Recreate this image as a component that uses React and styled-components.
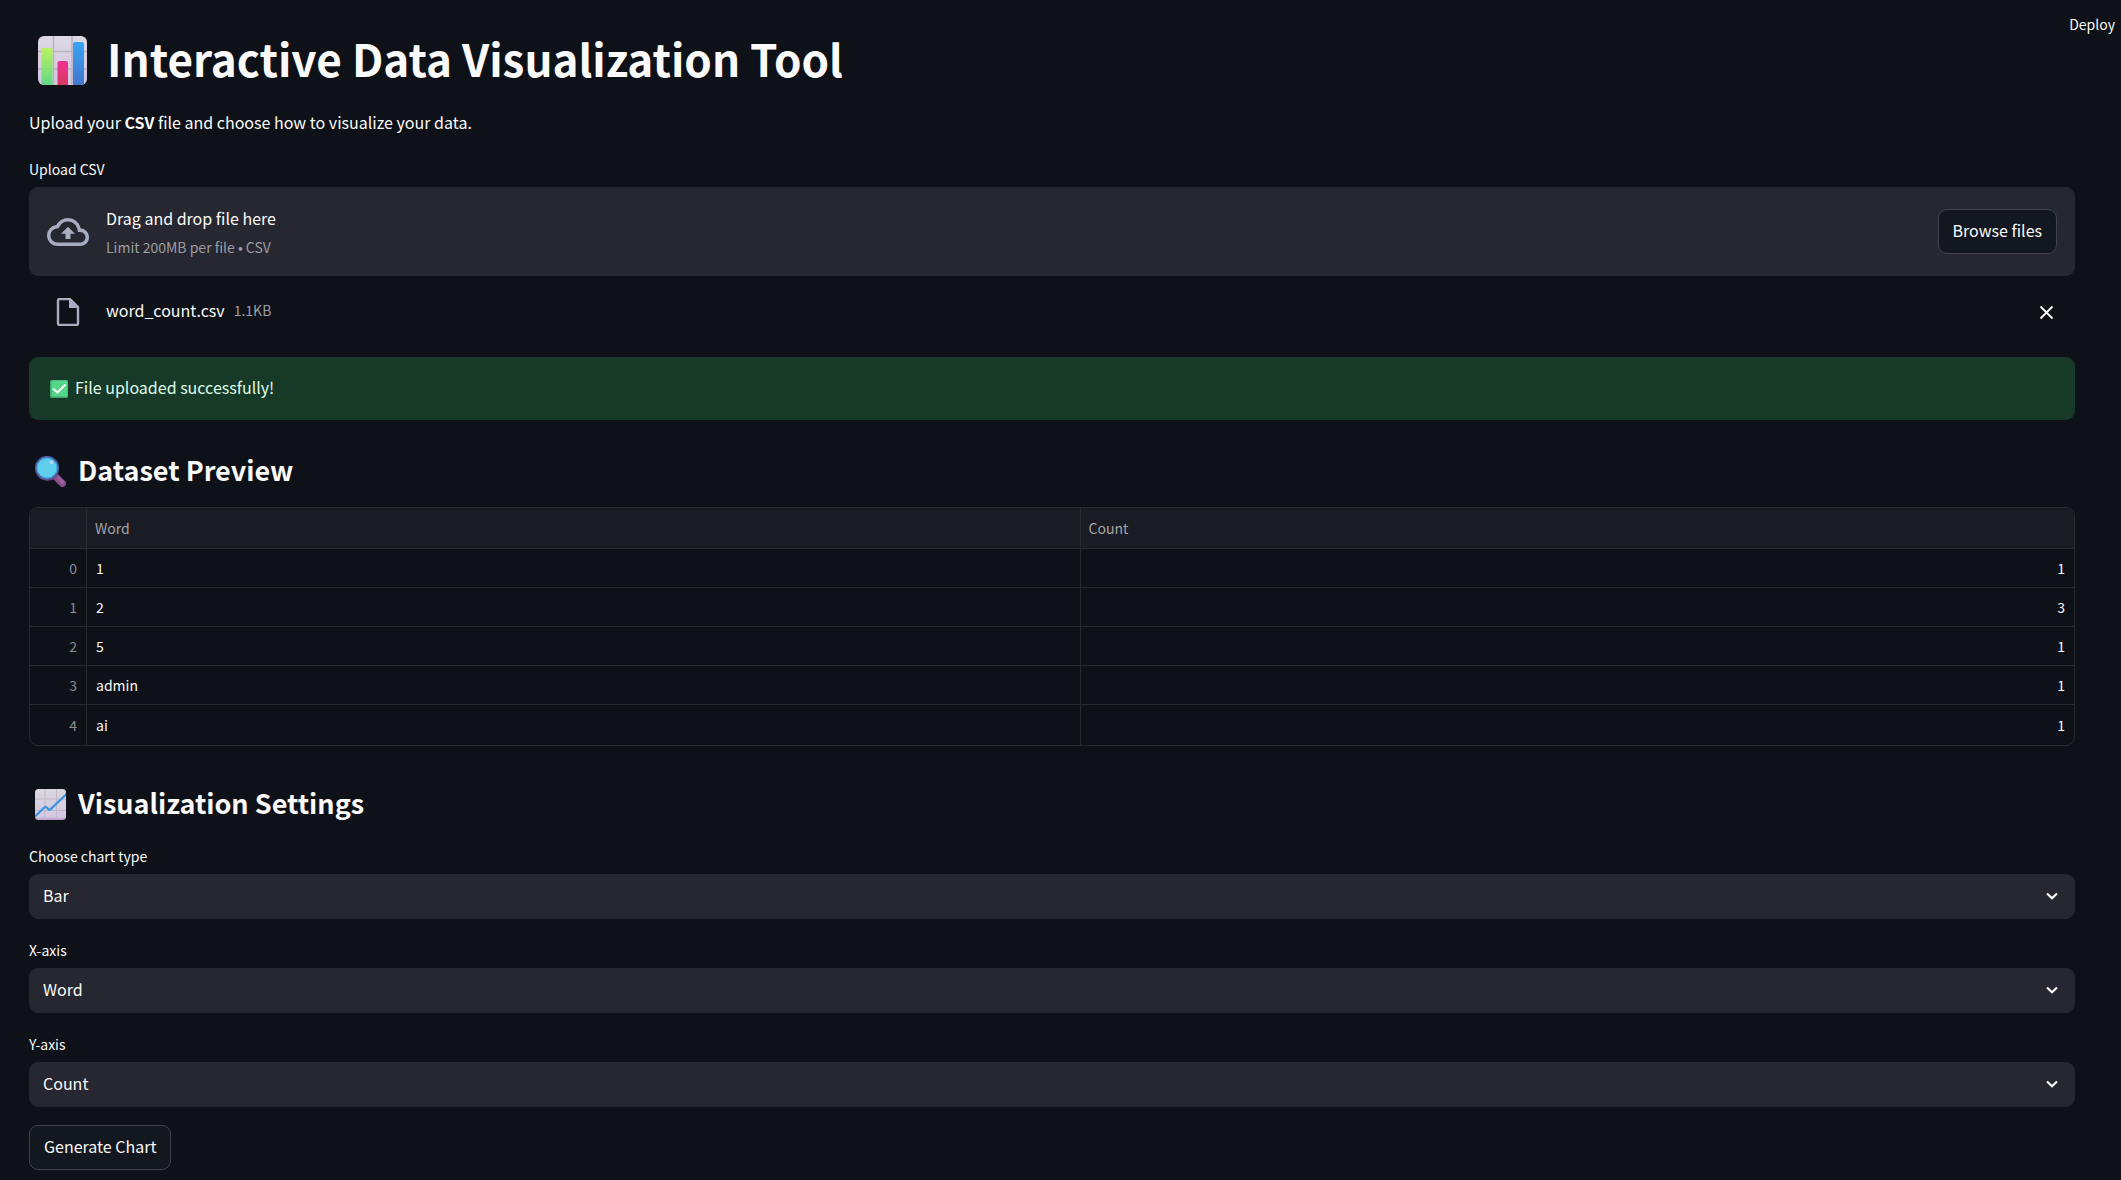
import React, { useRef } from "react";
import styled, { createGlobalStyle } from "styled-components";

const GlobalStyle = createGlobalStyle`
  *, *::before, *::after { box-sizing: border-box; }
  body {
    margin: 0;
    background: #0e1117;
    color: #fafafa;
    font-family: "Source Sans Pro", "Noto Sans CJK JP", "Noto Sans", sans-serif;
    font-size: 16px;
    line-height: 28px;
  }
  button, select, input { font: inherit; color: inherit; }
`;

const Page = styled.div`
  position: relative;
  padding: 24px 46px 8px 29px;
`;

const DeployButton = styled.button`
  position: absolute;
  top: 10px;
  right: 6px;
  padding: 0;
  border: 0;
  background: none;
  font-size: 14px;
  line-height: 28px;
  cursor: pointer;
`;

const Title = styled.h1`
  display: flex;
  align-items: center;
  gap: 20px;
  margin: 0;
  padding-left: 9px;
  font-size: 44px;
  line-height: 69px;
  font-weight: 700;
`;

const Intro = styled.p`
  margin: 12px 0 20px;
`;

const Label = styled.label`
  display: block;
  margin-bottom: 4px;
  font-size: 14px;
  line-height: 27px;
`;

const HiddenFileInput = styled.input`
  position: absolute;
  width: 1px;
  height: 1px;
  opacity: 0;
`;

const Button = styled.button`
  height: 45px;
  padding: 0 14px 3px;
  border: 1px solid #41444c;
  border-radius: 9px;
  background: #131720;
  cursor: pointer;
`;

const Dropzone = styled.div`
  display: flex;
  align-items: center;
  gap: 17px;
  height: 89px;
  padding: 0 18px;
  border-radius: 9px;
  background: #262730;
`;

const DropText = styled.div`
  flex: 1;
  display: flex;
  flex-direction: column;
  gap: 1px;
  padding-top: 2px;
`;

const Muted = styled.span`
  color: #9c9da2;
  font-size: 14px;
`;

const FileRow = styled.div`
  display: flex;
  align-items: center;
  gap: 26px;
  height: 36px;
  margin: 18px 0 27px;
  padding: 0 17px 0 27px;
`;

const FileInfo = styled.div`
  flex: 1;
  display: flex;
  gap: 9px;
  padding-bottom: 4px;
`;

const IconButton = styled.button`
  display: flex;
  padding: 4px;
  border: 0;
  background: none;
  cursor: pointer;
`;

const Alert = styled.div`
  display: flex;
  align-items: center;
  gap: 7px;
  height: 63px;
  margin-bottom: 27px;
  padding: 0 21px;
  border-radius: 9px;
  background: #173928;
  color: #dffde9;
`;

const Heading = styled.h2`
  display: flex;
  align-items: center;
  gap: 12px;
  margin: 0;
  padding-left: 6px;
  font-size: 27px;
  line-height: 45px;
  font-weight: 700;
`;

/* The glyphs sit low in their line box; the padding centres them on the icon. */
const IconLabel = styled.span`
  padding-bottom: 3px;
`;

const TableFrame = styled.div`
  margin: 12px 0 34px;
  border: 1px solid #282a30;
  border-radius: 9px;
  overflow: hidden;
`;

const Table = styled.table`
  width: 100%;
  table-layout: fixed;
  border-collapse: separate;
  border-spacing: 0;
  font-size: 14px;
  line-height: 20px;
`;

const cellEdge = `
  border-right: 1px solid #282a30;
  border-bottom: 1px solid #282a30;
  &:last-child { border-right: 0; }
`;

const HeadCell = styled.th`
  ${cellEdge}
  width: ${(p) => p.$width || "auto"};
  height: 41px;
  padding: 0 8px;
  background: #1a1c24;
  color: #a3a4a9;
  font-weight: 400;
  text-align: left;
`;

const Cell = styled.td`
  ${cellEdge}
  height: 39px;
  padding: 0 9px 1px;
  text-align: ${(p) => (p.$numeric ? "right" : "left")};
  color: ${(p) => (p.$index ? "#8c8d92" : "#fafafa")};
  tr:last-child > & { height: 40px; border-bottom: 0; }
`;

const Settings = styled.form`
  display: flex;
  flex-direction: column;
  align-items: stretch;
  gap: 18px;
  margin-top: 15px;
`;

const SelectBox = styled.div`
  position: relative;
`;

const Select = styled.select`
  display: block;
  appearance: none;
  width: 100%;
  height: 45px;
  padding: 0 40px 3px 14px;
  border: 0;
  border-radius: 9px;
  background: #262730;
`;

const Chevron = styled.svg`
  position: absolute;
  top: 13px;
  right: 14px;
  pointer-events: none;
`;

const SubmitButton = styled(Button)`
  align-self: flex-start;
`;

function BarChartEmoji() {
  return (
    <svg width="49" height="49" viewBox="0 0 49 49" aria-hidden="true">
      <defs>
        <linearGradient id="tile" x1="0" y1="0" x2="0" y2="1">
          <stop offset="0" stopColor="#dcd9e2" />
          <stop offset="1" stopColor="#d3c5e0" />
        </linearGradient>
        <linearGradient id="lime" x1="0" y1="0" x2="0" y2="1">
          <stop offset="0" stopColor="#bdf25f" />
          <stop offset="1" stopColor="#5fd888" />
        </linearGradient>
        <linearGradient id="pink" x1="0" y1="0" x2="0" y2="1">
          <stop offset="0" stopColor="#ee3190" />
          <stop offset="1" stopColor="#d93a63" />
        </linearGradient>
        <linearGradient id="azure" x1="0" y1="0" x2="0" y2="1">
          <stop offset="0" stopColor="#38a4f3" />
          <stop offset="1" stopColor="#4376cc" />
        </linearGradient>
        <clipPath id="tileClip"><rect width="49" height="49" rx="6" /></clipPath>
      </defs>
      <g clipPath="url(#tileClip)">
        <rect width="49" height="49" fill="url(#tile)" />
        <path d="M15.500 0V49M34 0V49M0 15.500H49M0 33H49" stroke="#b9b3c1" strokeWidth="1.500" />
        <path d="M3.500 49V14a2 2 0 0 1 2-2h7a2 2 0 0 1 2 2v35z" fill="url(#lime)" />
        <path d="M19.500 49V27a2 2 0 0 1 2-2h6.500a2 2 0 0 1 2 2v22z" fill="url(#pink)" />
        <path d="M35 49V8a2 2 0 0 1 2-2h7a2 2 0 0 1 2 2v41z" fill="url(#azure)" />
      </g>
    </svg>
  );
}

function TrendEmoji() {
  return (
    <svg width="31" height="31" viewBox="0 0 31 31" aria-hidden="true">
      <defs>
        <linearGradient id="sheet" x1="0" y1="0" x2="0" y2="1">
          <stop offset="0" stopColor="#dad8df" />
          <stop offset="0.900" stopColor="#d5c8e2" />
          <stop offset="1" stopColor="#b79bc9" />
        </linearGradient>
        <clipPath id="sheetClip"><rect width="31" height="31" rx="3.500" /></clipPath>
      </defs>
      <g clipPath="url(#sheetClip)">
        <rect width="31" height="31" fill="url(#sheet)" />
        <path d="M10 0V31M21.500 0V31M0 10H31M0 21.500H31" stroke="#bfb9c8" />
        <path d="M-1 28.500L9.500 18.300q1-.8 2 0l2 2q1 .8 2 0L32 4.500" fill="none" stroke="#3694e0" strokeWidth="2.200" />
      </g>
    </svg>
  );
}

function MagnifierEmoji() {
  return (
    <svg width="31" height="31" viewBox="0 0 31 31" aria-hidden="true">
      <path d="M19.500 19.500L27.500 27.500" stroke="#8a4f8e" strokeWidth="6.800" strokeLinecap="round" />
      <path d="M22.500 21L28 26.500" stroke="#9c619e" strokeWidth="2.500" strokeLinecap="round" />
      <circle cx="12" cy="12" r="11.200" fill="#5fcdec" stroke="#4d5fa5" strokeWidth="1.800" />
      <circle cx="12" cy="12" r="10" fill="none" stroke="#3fa9e4" />
      <path d="M2 18A12 12 0 0 0 23 18" fill="none" stroke="#6a4b8a" strokeWidth="1.300" />
      <ellipse cx="16.500" cy="6.300" rx="2" ry="1.700" fill="#b5d7f3" transform="rotate(35 16.500 6.300)" />
    </svg>
  );
}

function CheckEmoji() {
  return (
    <svg width="18" height="18" viewBox="0 0 18 18" aria-hidden="true">
      <rect width="18" height="18" rx="1.500" fill="#43a870" />
      <rect x="1.500" y="0.500" width="16" height="16" rx="1" fill="#55d68b" />
      <path d="M3.500 9L7.300 12.500L15 5" fill="none" stroke="#fff" strokeWidth="1.800" strokeLinecap="round" strokeLinejoin="round" />
    </svg>
  );
}

function CloudUploadIcon() {
  return (
    <svg width="42" height="42" viewBox="0 0 24 24" fill="#a9adc1" aria-hidden="true">
      <path d="M19.350 10.040A7.490 7.490 0 0 0 12 4C9.110 4 6.600 5.640 5.350 8.040A5.994 5.994 0 0 0 0 14c0 3.310 2.690 6 6 6h13c2.760 0 5-2.240 5-5 0-2.640-2.050-4.780-4.650-4.960zM19 18H6c-2.210 0-4-1.790-4-4 0-2.050 1.530-3.760 3.560-3.970l1.070-.11.500-.95A5.469 5.469 0 0 1 12 6c2.620 0 4.880 1.860 5.390 4.430l.3 1.500 1.530.11A2.980 2.980 0 0 1 22 15c0 1.650-1.350 3-3 3zM8 13h2.550v3h2.900v-3H16l-4-4z" />
    </svg>
  );
}

function FileIcon() {
  return (
    <svg width="24" height="28" viewBox="0 0 24 28" aria-hidden="true">
      <path d="M14 1H3.500A1.500 1.500 0 0 0 2 2.500v23A1.500 1.500 0 0 0 3.500 27h17a1.500 1.500 0 0 0 1.500-1.500V9z" fill="none" stroke="#a9adc1" strokeWidth="2.400" strokeLinejoin="round" />
      <path d="M13 1V10H22z" fill="#a9adc1" />
    </svg>
  );
}

function CloseIcon() {
  return (
    <svg width="15" height="15" viewBox="0 0 15 15" aria-hidden="true">
      <path d="M1.500 1.500L13.500 13.500M13.500 1.500L1.500 13.500" stroke="#fafafa" strokeWidth="1.800" />
    </svg>
  );
}

const rows = [
  ["1", 1],
  ["2", 3],
  ["5", 1],
  ["admin", 1],
  ["ai", 1],
];

const fields = [
  { id: "chart-type", label: "Choose chart type", value: "Bar", options: ["Bar"] },
  { id: "x-axis", label: "X-axis", value: "Word", options: ["Word", "Count"] },
  { id: "y-axis", label: "Y-axis", value: "Count", options: ["Word", "Count"] },
];

function SelectField({ id, label, value, options }) {
  return (
    <div>
      <Label htmlFor={id}>{label}</Label>
      <SelectBox>
        <Select id={id} defaultValue={value}>
          {options.map((o) => (
            <option key={o}>{o}</option>
          ))}
        </Select>
        <Chevron width="18" height="18" viewBox="0 0 18 18" aria-hidden="true">
          <path d="M4 6.500L9 11.300L14 6.500" fill="none" stroke="#fafafa" strokeWidth="2.200" />
        </Chevron>
      </SelectBox>
    </div>
  );
}

export default function App() {
  const fileInput = useRef(null);
  return (
    <Page>
      <GlobalStyle />
      <DeployButton type="button">Deploy</DeployButton>
      <main>
        <Title>
          <BarChartEmoji />
          <IconLabel>Interactive Data Visualization Tool</IconLabel>
        </Title>
        <Intro>
          Upload your <strong>CSV</strong> file and choose how to visualize your data.
        </Intro>

        <Label htmlFor="csv-file">Upload CSV</Label>
        <HiddenFileInput ref={fileInput} id="csv-file" type="file" accept=".csv" tabIndex={-1} />
        <Dropzone>
          <CloudUploadIcon />
          <DropText>
            <span>Drag and drop file here</span>
            <Muted>Limit 200MB per file • CSV</Muted>
          </DropText>
          <Button type="button" onClick={() => fileInput.current.click()}>
            Browse files
          </Button>
        </Dropzone>
        <FileRow>
          <FileIcon />
          <FileInfo>
            <span>word_count.csv</span>
            <Muted>1.1KB</Muted>
          </FileInfo>
          <IconButton type="button" aria-label="Remove file">
            <CloseIcon />
          </IconButton>
        </FileRow>

        <Alert role="status">
          <CheckEmoji />
          <IconLabel>File uploaded successfully!</IconLabel>
        </Alert>

        <Heading>
          <MagnifierEmoji />
          <IconLabel>Dataset Preview</IconLabel>
        </Heading>
        <TableFrame>
          <Table>
            <thead>
              <tr>
                <HeadCell $width="57px" aria-label="Index" />
                <HeadCell>Word</HeadCell>
                <HeadCell>Count</HeadCell>
              </tr>
            </thead>
            <tbody>
              {rows.map(([word, count], i) => (
                <tr key={word}>
                  <Cell $numeric $index>{i}</Cell>
                  <Cell>{word}</Cell>
                  <Cell $numeric>{count}</Cell>
                </tr>
              ))}
            </tbody>
          </Table>
        </TableFrame>

        <Heading>
          <TrendEmoji />
          <IconLabel>Visualization Settings</IconLabel>
        </Heading>
        <Settings onSubmit={(e) => e.preventDefault()}>
          {fields.map((f) => (
            <SelectField key={f.id} {...f} />
          ))}
          <SubmitButton type="submit">Generate Chart</SubmitButton>
        </Settings>
      </main>
    </Page>
  );
}
